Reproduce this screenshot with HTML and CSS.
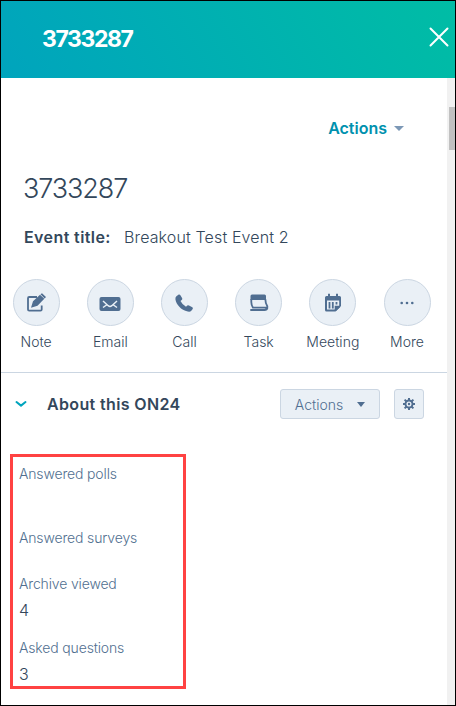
FILE: index.html
```html
<!DOCTYPE html>
<html lang="en">
<head>
<meta charset="utf-8">
<title>3733287</title>
<link rel="stylesheet" href="styles.css">
</head>
<body>
<div class="panel">
  <header class="panel-header">
    <h1 class="panel-title">3733287</h1>
    <svg class="close" width="20" height="20" viewBox="0 0 20 20"><path d="M1.5 1.5 18.5 18.5M18.5 1.5 1.5 18.5"/></svg>
  </header>
  <div class="panel-body">
    <main class="content">
      <div class="top-actions"><span class="top-label">Actions</span><i class="caret"></i></div>
      <h2 class="record-name">3733287</h2>
      <div class="record-line"><b class="event-key">Event title:</b><span class="event-value">Breakout Test Event 2</span></div>
      <nav class="tools">
        <div class="tool"><span class="circle"><svg width="20" height="20" viewBox="0 0 20 20"><path class="line" d="M11 4H3.200Q2 4 2 5.200V16.500Q2 17.700 3.200 17.700H14.500Q15.700 17.700 15.700 16.500V12.500"/><path class="fill" d="M5 14.700 7 8.300 14 1.700 18.300 5.800 11.500 12.700ZM14.500 1.200 16 .200 20 3.900 18.700 5.400Z"/></svg></span><span class="tool-label">Note</span></div>
        <div class="tool"><span class="circle"><svg class="low" width="22" height="16" viewBox="0 0 22 16"><rect class="fill" x="0.500" y="1" width="21" height="14" rx="2"/><path class="cut" d="m4 5 5.200 4.700q1.800 1.500 3.600 0L18 5M4 11.500 7.500 9M18 11.500 14.500 9"/></svg></span><span class="tool-label">Email</span></div>
        <div class="tool"><span class="circle"><svg width="20" height="20" viewBox="0 0 20 20"><path class="fill" d="M2.400 3.300 4.700 1.600Q5.700 1.200 6.400 2.200L8.200 5.300Q8.600 6.300 7.700 7L6.500 8Q8.500 12 12 13.800L13.300 12.600Q14 12 15 12.500L18.300 14.300Q19.300 15 18.700 16L17.100 18Q16 19 13.800 18.500C7 17 2.200 11.500 1.400 6.200Q1.200 4.300 2.400 3.300Z"/></svg></span><span class="tool-label">Call</span></div>
        <div class="tool"><span class="circle"><svg width="20" height="20" viewBox="0 0 20 20"><path class="fill" d="M3 1.500H15.500Q17 1.500 17 3V7H1.500V3Q1.500 1.500 3 1.500Z"/><path class="line" d="M2.300 6V9Q2.300 12 4 14.700H17.500Q18.700 14.500 18.200 13 16.400 10 16.300 6M1.300 17H15.500Q18 17 18.500 14.500"/></svg></span><span class="tool-label">Task</span></div>
        <div class="tool"><span class="circle"><svg width="20" height="20" viewBox="0 0 20 20"><path class="fill" fill-rule="evenodd" d="M3.500 3H5V.700H7V3H13V.700H15V3H16.500Q18 3 18 4.500V13L12.500 18.500H3.500Q2 18.500 2 17V4.500Q2 3 3.500 3ZM4 7.500V16.500H11.700V12.700H16.200V7.500Z"/><path class="bars" d="M6.500 9V15.500M9.800 9V15.500M13.500 9V11.500"/><path class="fill" d="M13 13.700H17.500L13 18Z"/></svg></span><span class="tool-label">Meeting</span></div>
        <div class="tool"><span class="circle"><svg width="16" height="6" viewBox="0 0 16 6"><g class="fill"><circle cx="2.700" cy="3" r="1.300"/><circle cx="8" cy="3" r="1.300"/><circle cx="13.300" cy="3" r="1.300"/></g></svg></span><span class="tool-label">More</span></div>
      </nav>
      <section class="about">
        <div class="about-head">
          <svg class="chevron" width="12" height="8" viewBox="0 0 12 8"><path d="M1.500 2 6 5.600 10.500 2"/></svg>
          <h3 class="about-title">About this ON24</h3>
          <div class="button actions-button"><span>Actions</span><i class="caret dark"></i></div>
          <div class="button gear-button"><svg width="12" height="12" viewBox="0 0 12 12"><circle cx="6" cy="6" r="3.500" class="gear-ring"/><path class="gear-teeth" d="M6 0V3M6 9V12M0 6H3M9 6H12M1.600 1.600 3.800 3.800M8.200 8.200 10.400 10.400M10.400 1.600 8.200 3.800M3.800 8.200 1.600 10.400"/><circle class="fill" cx="6" cy="6" r="1.200"/></svg></div>
        </div>
        <dl class="properties">
          <div class="property tall"><dt>Answered polls</dt></div>
          <div class="property"><dt>Answered surveys</dt></div>
          <div class="property tall"><dt>Archive viewed</dt><dd>4</dd></div>
          <div class="property tall"><dt>Asked questions</dt><dd>3</dd></div>
        </dl>
      </section>
    </main>
    <div class="scrollbar"><div class="thumb"></div></div>
  </div>
</div>
</body>
</html>
```
FILE: styles.css
```css
* { box-sizing: border-box; }
body { margin: 0; font-family: Inter, "Liberation Sans", sans-serif; color: #33475b; }
h1, h2, h3, dl, dt, dd { margin: 0; }
svg { display: block; flex: none; }
.panel { width: 456px; height: 706px; border: 1px solid #000; background: #fff; display: flex; flex-direction: column; }
.panel-header { height: 77px; flex: none; display: flex; align-items: center; justify-content: space-between; padding: 0 6px 2px 41px; background: linear-gradient(60deg, #00a4bd, #00bda5); }
.panel-title { font-size: 23px; line-height: 30px; font-weight: 700; color: #fff; letter-spacing: -1.400px; }
.close { margin-top: -4px; }
.close path { fill: none; stroke: #fff; stroke-width: 2; stroke-linecap: round; }
.panel-body { flex: 1; display: flex; }
.content { width: 446px; }
.scrollbar { width: 8px; background: #f1f1f1; padding: 29px 0 0 2px; }
.thumb { height: 43px; background: #c1c1c1; }
.top-actions { margin: 39px 43px 0 0; height: 22px; display: flex; align-items: center; justify-content: flex-end; gap: 7px; color: #0091ae; font-size: 16px; font-weight: 600; }
.caret { border: 5px solid transparent; border-top-color: #7c98b6; border-bottom: 0; }
.caret.dark { border-width: 5px 4.500px 0; border-top-color: #506e91; }
.record-name { margin: 32px 0 0 22px; height: 36px; line-height: 36px; font-size: 27px; font-weight: 300; letter-spacing: -1.100px; }
.record-line { margin: 19px 0 0 23px; height: 22px; line-height: 22px; display: flex; font-size: 16px; }
.event-key { width: 100px; font-weight: 600; letter-spacing: .4px; white-space: nowrap; }
.event-value { font-weight: 300; letter-spacing: .13px; }
.tools { display: grid; grid-template-columns: repeat(6, 74.200px); margin: 31px 0 0 -2px; height: 93px; }
.tool { display: flex; flex-direction: column; align-items: center; }
.circle { width: 47px; height: 47px; border: 1px solid #cbd6e2; border-radius: 50%; background: #eaf0f6; display: flex; align-items: center; justify-content: center; }
.low { margin-top: 3px; }
.tool-label { margin-top: 6px; height: 20px; line-height: 20px; font-size: 14px; font-weight: 300; }
.fill { fill: #506e91; }
.line { fill: none; stroke: #506e91; stroke-width: 1.800; }
.cut { fill: none; stroke: #eaf0f6; stroke-width: 1.500; }
.bars { stroke: #506e91; stroke-width: 1.800; }
.about { border-top: 1px solid #cbd6e2; }
.about-head { display: flex; align-items: center; height: 30px; margin: 16px 23px 0 14px; }
.chevron path { fill: none; stroke: #00a4bd; stroke-width: 2; stroke-linecap: round; stroke-linejoin: round; }
.about-title { flex: 1; margin-left: 20px; font-size: 16px; font-weight: 600; line-height: 24px; letter-spacing: .36px; white-space: nowrap; }
.button { height: 30px; display: flex; align-items: center; justify-content: center; border: 1px solid #cbd6e2; border-radius: 3px; background: #eaf0f6; color: #506e91; }
.actions-button { width: 100px; margin-right: 14px; gap: 14px; font-size: 14px; font-weight: 300; }
.gear-button { width: 30px; }
.gear-ring { fill: none; stroke: #506e91; stroke-width: 1.900; }
.gear-teeth { fill: none; stroke: #506e91; stroke-width: 2; }
.properties { width: 176px; height: 235px; margin: 35px 0 0 9px; border: 3px solid #ff4242; padding: 7px 0 0 6px; }
.property { height: 46px; }
.property.tall { height: 64px; }
dt { height: 20px; line-height: 20px; font-size: 14px; font-weight: 300; letter-spacing: -.15px; color: #516f90; white-space: nowrap; }
dd { margin-top: 5px; height: 22px; line-height: 22px; font-size: 16px; font-weight: 300; }
```
